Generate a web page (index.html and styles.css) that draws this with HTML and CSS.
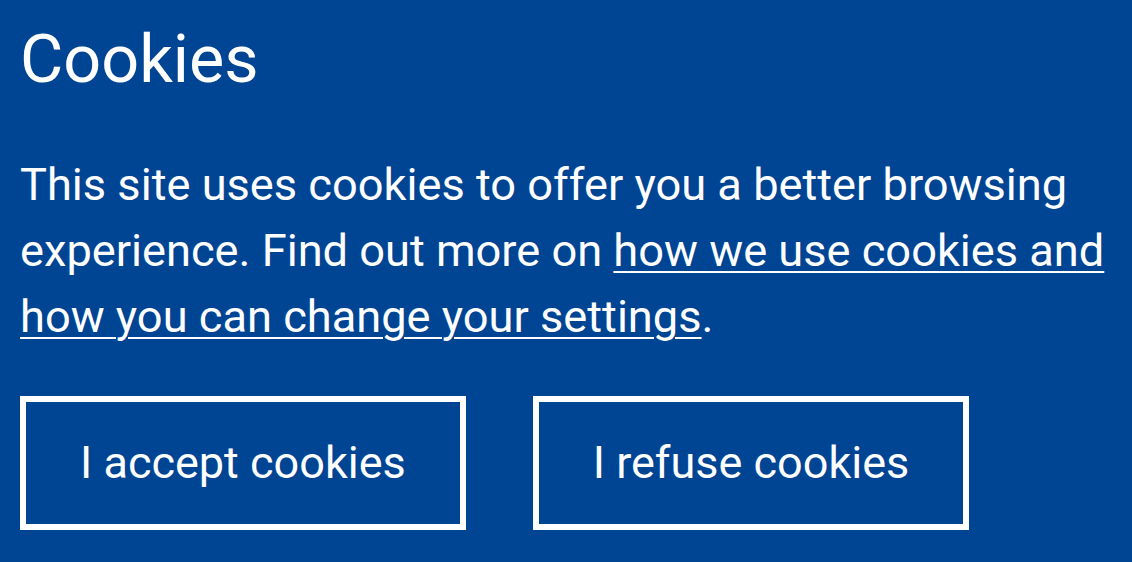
FILE: index.html
```html
<!DOCTYPE html>
<html lang="en">
<head>
<meta charset="utf-8">
<title>Cookies</title>
<link rel="stylesheet" href="styles.css">
</head>
<body>
<div class="banner">
  <h1 class="title">Cookies</h1>
  <p class="text">This site uses cookies to offer you a better browsing experience. Find out more on <a class="link" href="#">how we use cookies and how you can change your settings</a>.</p>
  <div class="actions">
    <button class="btn" type="button">I accept cookies</button>
    <button class="btn" type="button">I refuse cookies</button>
  </div>
</div>
</body>
</html>
```
FILE: styles.css
```css
html, body {
  margin: 0;
  padding: 0;
  background: #004494;
}
body {
  font-family: Roboto, "Liberation Sans", sans-serif;
  color: #ffffff;
}
.banner {
  padding: 20px;
}
.title {
  margin: 0;
  font-size: 66.5px;
  font-weight: 400;
  line-height: 78px;
}
.text {
  margin: 54px 0 0;
  font-size: 45.2px;
  line-height: 66px;
}
.link {
  color: #ffffff;
  text-decoration: underline;
  text-decoration-thickness: 2px;
  text-underline-offset: 5px;
}
.actions {
  display: flex;
  gap: 67px;
  margin-top: 46px;
}
.btn {
  font-family: inherit;
  font-size: 45px;
  line-height: 66px;
  color: #ffffff;
  background: transparent;
  border: 6px solid #ffffff;
  border-radius: 0;
  padding: 28px 54px;
  margin: 0;
}
```
